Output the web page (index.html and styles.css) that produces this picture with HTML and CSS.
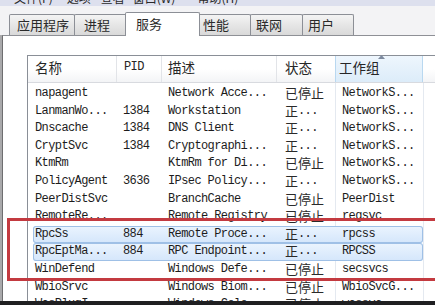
FILE: index.html
```html
<!DOCTYPE html>
<html lang="zh-CN">
<head>
<meta charset="utf-8">
<title>任务管理器 - 服务</title>
<link rel="stylesheet" href="styles.css">
</head>
<body>
<div class="win">
  <div class="menubar">
    <div class="menu-inner">
      <span class="m m1">文件(F)</span><span class="m m2">选项</span><span class="m m3">查看</span><span class="m m4">窗口(W)</span><span class="m m5">帮助(H)</span>
    </div>
  </div>
  <div class="tabs">
    <div class="tab">应用程序</div>
    <div class="tab">进程</div>
    <div class="tab sel">服务</div>
    <div class="tab">性能</div>
    <div class="tab">联网</div>
    <div class="tab">用户</div>
  </div>
  <div class="panel">
    <div class="lv">
      <div class="lv-head">
        <div class="h c-name">名称</div>
        <div class="h c-pid mono">PID</div>
        <div class="h c-desc">描述</div>
        <div class="h c-stat">状态</div>
        <div class="h c-wg sorted">工作组<svg class="arrow" width="7" height="4" viewBox="0 0 7 4"><path d="M0 4 L3.5 0 L7 4 Z" fill="#7d8a9e"/></svg></div>
        <div class="h c-fill"></div>
      </div>
      <div class="lv-body">
        <div class="row"><span>napagent</span><span></span><span>Network Acce...</span><span><b class="cj">已停止</b></span><span>NetworkS...</span></div>
        <div class="row"><span>LanmanWo...</span><span>1384</span><span>Workstation</span><span><b class="cj">正</b>...</span><span>NetworkS...</span></div>
        <div class="row"><span>Dnscache</span><span>1384</span><span>DNS Client</span><span><b class="cj">正</b>...</span><span>NetworkS...</span></div>
        <div class="row"><span>CryptSvc</span><span>1384</span><span>Cryptographi...</span><span><b class="cj">正</b>...</span><span>NetworkS...</span></div>
        <div class="row"><span>KtmRm</span><span></span><span>KtmRm for Di...</span><span><b class="cj">已停止</b></span><span>NetworkS...</span></div>
        <div class="row"><span>PolicyAgent</span><span>3636</span><span>IPsec Policy...</span><span><b class="cj">正</b>...</span><span>NetworkS...</span></div>
        <div class="row"><span>PeerDistSvc</span><span></span><span>BranchCache</span><span><b class="cj">已停止</b></span><span>PeerDist</span></div>
        <div class="row"><span>RemoteRe...</span><span></span><span>Remote Registry</span><span><b class="cj">已停止</b></span><span>regsvc</span></div>
        <div class="row selected"><span>RpcSs</span><span>884</span><span>Remote Proce...</span><span><b class="cj">正</b>...</span><span>rpcss</span></div>
        <div class="row selected"><span>RpcEptMa...</span><span>884</span><span>RPC Endpoint...</span><span><b class="cj">正</b>...</span><span>RPCSS</span></div>
        <div class="row"><span>WinDefend</span><span></span><span>Windows Defe...</span><span><b class="cj">已停止</b></span><span>secsvcs</span></div>
        <div class="row"><span>WbioSrvc</span><span></span><span>Windows Biom...</span><span><b class="cj">已停止</b></span><span>WbioSvcG...</span></div>
        <div class="row"><span>WcsPlugI...</span><span></span><span>Windows Colo...</span><span><b class="cj">已停止</b></span><span>wcssvc</span></div>
      </div>
    </div>
    <div class="redbox"></div>
  </div>
  <div class="taskbar"></div>
</div>
</body>
</html>
```

FILE: styles.css
```css
* { box-sizing: border-box; }
html, body { margin: 0; padding: 0; }
body {
  width: 435px;
  height: 305px;
  overflow: hidden;
  background: #f1f1f3;
  font-family: "Noto Sans CJK SC", sans-serif;
}
.win {
  width: 435px;
  height: 305px;
  display: flex;
  flex-direction: column;
  overflow: hidden;
}
.menubar {
  height: 6px;
  flex: none;
  background: #dde0ee;
  overflow: hidden;
}
.menu-inner {
  margin-top: -9px;
  height: 14px;
  line-height: 14px;
  font-size: 12px;
  color: #2a2a2a;
  white-space: nowrap;
  display: flex;
}
.m1 { margin-left: 14px; }
.m2 { margin-left: 14px; }
.m3 { margin-left: 10px; }
.m4 { margin-left: 8px; }
.m5 { margin-left: 22px; }

.tabs {
  height: 29px;
  flex: none;
  display: flex;
  align-items: flex-end;
  padding-left: 9px;
  background: #f3f3f5;
  position: relative;
  z-index: 2;
}
.tab {
  height: 21px;
  border: 1px solid #8c8f96;
  border-bottom: none;
  border-radius: 2px 2px 0 0;
  background: linear-gradient(#f4f4f4, #e6e6e6 50%, #d9d9d9);
  font-size: 13px;
  line-height: 19px;
  color: #2a2a2a;
  padding-left: 6px;
  margin-left: -1px;
  white-space: nowrap;
}
.tab:nth-child(1) { width: 66px; margin-left: 0; padding-left: 7px; }
.tab:nth-child(2) { width: 54px; padding-left: 9px; }
.tab:nth-child(3) { width: 75px; }
.tab:nth-child(4) { width: 54px; padding-left: 5px; }
.tab:nth-child(5) { width: 53px; padding-left: 5px; }
.tab:nth-child(6) { width: 52px; padding-left: 5px; }
.tab.sel {
  height: 24px;
  margin-bottom: -1px;
  margin-left: -3px;
  margin-right: -2px;
  background: #ffffff;
  line-height: 21px;
  padding-left: 10px;
  position: relative;
  z-index: 3;
}

.panel {
  height: 266px;
  flex: none;
  background: #ffffff;
  border-top: 1px solid #8e9096;
  border-left: 1px solid #6e6e70;
  margin-left: 2px;
  box-shadow: -2px 0 0 #a9a9ab;
  position: relative;
  overflow: hidden;
  padding: 19px 0 0 24px;
}
.lv {
  width: 430px;
  border-top: 1px solid #8a8f97;
  border-left: 1px solid #8a8f97;
}
.lv-head {
  height: 27px;
  display: grid;
  grid-template-columns: 89px 45px 115px 59px 87px 1fr;
  background: linear-gradient(#ffffff, #ffffff 50%, #f3f4f6);
  border-bottom: 1px solid #d8dadf;
}
.h {
  font-size: 13.5px;
  line-height: 22px;
  color: #262626;
  border-right: 1px solid #e2e4e8;
  white-space: nowrap;
  position: relative;
}
.h.mono {
  font-family: "Liberation Mono", monospace;
  font-size: 12px;
  letter-spacing: -0.6px;
}
.c-name { padding-left: 7px; }
.c-pid { padding-left: 7px; }
.c-desc { padding-left: 6px; }
.c-stat { padding-left: 8px; }
.c-wg { padding-left: 2px; }
.h.c-fill { border-right: none; }
.h.sorted {
  background: linear-gradient(#eef6fd, #dcecf9);
  border-left: 1px solid #b9d8f0;
  border-right: 1px solid #b9d8f0;
  margin-left: -1px;
  padding-left: 3px;
}
.arrow {
  position: absolute;
  left: 42px;
  top: -1px;
}

.lv-body {
  padding-top: 2px;
  font-family: "Liberation Mono", "Noto Sans CJK SC", monospace;
  font-size: 12px;
  letter-spacing: -0.6px;
  color: #1c1c1c;
  background:
    linear-gradient(#e4e9f0, #e4e9f0) no-repeat 307px 0 / 1px 100%,
    linear-gradient(#e4e9f0, #e4e9f0) no-repeat 395px 0 / 1px 100%;
}
.row {
  height: 17.6px;
  margin-left: 5px;
  width: 390px;
  display: grid;
  grid-template-columns: 84px 45px 115px 59px 87px;
  line-height: 17.6px;
  white-space: nowrap;
  overflow: hidden;
}
.row span { overflow: hidden; }
.row span:nth-child(1) { padding-left: 2px; }
.row span:nth-child(2) { padding-left: 6px; }
.row span:nth-child(3) { padding-left: 6px; }
.row span:nth-child(4) { padding-left: 8px; }
.row span:nth-child(5) { padding-left: 6px; }
.row.selected {
  background: linear-gradient(#ebf4fe, #d4e6fb);
  box-shadow: inset 0 0 0 1px #9fc0e6;
  border-radius: 3px;
}
.cj {
  display: inline-block;
  vertical-align: top;
  line-height: 15px;
  font-family: "Noto Sans CJK SC", sans-serif;
  font-weight: normal;
  font-size: 13px;
  letter-spacing: 0;
  color: #2a2a2a;
}

.redbox {
  position: absolute;
  left: 4px;
  top: 182px;
  width: 450px;
  height: 63px;
  border: 3px solid #c33a40;
}

.taskbar {
  height: 4px;
  flex: none;
  background: #1f1f21;
}
```
